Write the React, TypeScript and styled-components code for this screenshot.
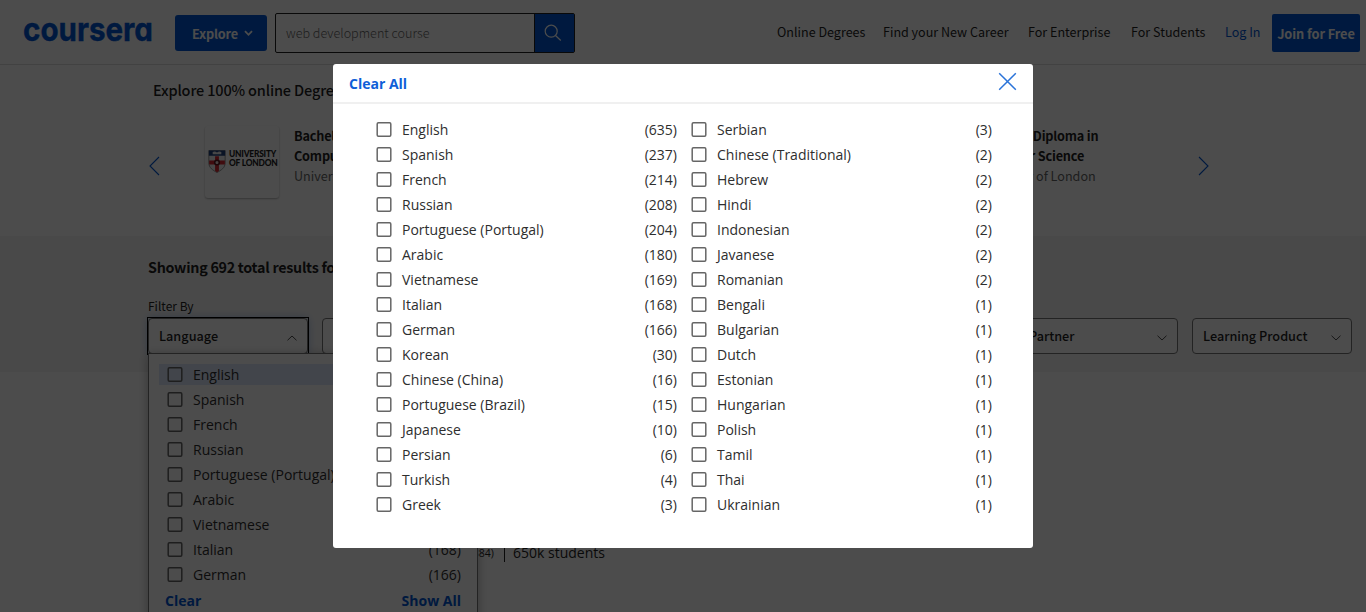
import React from 'react';
import styled, { createGlobalStyle } from 'styled-components';

const humanist = "'Noto Sans CJK SC', 'Noto Sans', sans-serif";
const body = "'Open Sans', 'Noto Sans', sans-serif";

const GlobalStyle = createGlobalStyle`
  *, *::before, *::after { box-sizing: border-box; }
  html, body, #root { height: 100%; }
  body { margin: 0; overflow: hidden; background: #fff; color: #1f1f1f; font-family: ${body}; font-size: 14px; }
  button { font: inherit; border: 0; padding: 0; background: none; }
`;

const Page = styled.div`
  height: 612px;
  overflow: hidden;
`;

const Header = styled.header`
  display: flex;
  align-items: center;
  height: 65px;
  padding: 2px 6px 0 24px;
  border-bottom: 1px solid #dcdcdc;
  font-family: ${humanist};
`;

const Logo = styled.svg`
  display: block;
  width: 129px;
  height: 30px;
  margin: -4px 22px 0 0;
  overflow: visible;
`;

const LogoText = styled.text`
  font-family: Inter, sans-serif;
  font-size: 33px;
  font-weight: 700;
  font-feature-settings: 'cv11';
  fill: #0056d2;
  stroke: #0056d2;
  stroke-width: 0.4px;
`;

const ExploreButton = styled.button`
  display: flex;
  align-items: center;
  justify-content: center;
  gap: 6px;
  width: 92px;
  height: 36px;
  margin-right: 8px;
  padding: 1px 0 0 3px;
  border-radius: 3px;
  background: #0056d2;
  color: #fff;
  font-size: 12.7px;
  font-weight: 700;
  letter-spacing: -0.15px;
`;

const Search = styled.div`
  display: flex;
  width: 300px;
  height: 40px;
  border: 1px solid #1f1f1f;
  border-radius: 2px;
`;

const SearchText = styled.div`
  flex: 1;
  padding-left: 10px;
  color: #666;
  font-size: 12.6px;
  font-weight: 300;
  line-height: 38px;
`;

const SearchButton = styled.button`
  display: flex;
  align-items: center;
  justify-content: center;
  width: 40px;
  padding-right: 4px;
  border-left: 1px solid #1f1f1f;
  background: #0056d2;
`;

const Nav = styled.nav`
  display: flex;
  align-items: center;
  gap: 18px;
  margin: -4px 0 0 auto;
`;

const NavLink = styled.span<{ $accent?: boolean; $width: number }>`
  width: ${p => p.$width}px;
  color: ${p => (p.$accent ? '#0056d2' : '#1f1f1f')};
  font-size: 12.55px;
  white-space: nowrap;
`;

const JoinButton = styled.button`
  width: 88px;
  height: 38px;
  margin-left: 12px;
  border-radius: 2px;
  background: #0056d2;
  color: #fff;
  font-family: ${humanist};
  font-size: 12.8px;
  font-weight: 700;
  letter-spacing: -0.1px;
  white-space: nowrap;
`;

const Degrees = styled.section`
  height: 171px;
  padding: 13px 0 0 148px;
  font-family: ${humanist};
`;

const DegreesTitle = styled.h2`
  margin: 0 0 0 5px;
  font-size: 14.5px;
  font-weight: 500;
  letter-spacing: -0.15px;
  line-height: 24px;
`;

const Carousel = styled.div`
  display: flex;
  align-items: flex-start;
  padding-top: 24px;
`;

const Arrow = styled.svg`
  flex: none;
  display: block;
  width: 12px;
  height: 20px;
  margin-top: 30px;
`;

const Slides = styled.div`
  display: flex;
  width: 1037px;
  padding-left: 45px;
`;

const Degree = styled.article`
  display: flex;
  flex: none;
  gap: 15px;
  width: 340px;
`;

const Crest = styled.div`
  display: flex;
  align-items: center;
  gap: 3px;
  width: 74px;
  height: 72px;
  padding: 0 0 1px 3px;
  border-radius: 3px;
  box-shadow: 0 1px 2px rgba(0, 0, 0, 0.3);
`;

const CrestName = styled.div`
  padding-bottom: 6px;
  font-family: Lato, sans-serif;
  font-size: 8.4px;
  font-weight: 900;
  line-height: 9px;
  letter-spacing: -0.2px;
  white-space: nowrap;
`;

const DegreeText = styled.div`
  font-size: 12.6px;
  line-height: 20px;
  white-space: nowrap;
  color: #666;

  strong { display: block; color: #1f1f1f; font-size: 12.7px; font-weight: 700; letter-spacing: -0.2px; }
`;

const Filters = styled.section`
  height: 136px;
  padding: 19px 0 0 148px;
  background: #f5f5f5;
  font-family: ${humanist};
`;

const ResultsTitle = styled.h1`
  margin: 0;
  font-size: 14.3px;
  font-weight: 700;
  letter-spacing: -0.27px;
  line-height: 24px;
`;

const FilterLabel = styled.div`
  margin-top: 18px;
  font-size: 12px;
  line-height: 18px;
`;

const FilterRow = styled.div`
  display: flex;
  gap: 14px;
  margin-top: 3px;
`;

const FilterBox = styled.div<{ $open?: boolean }>`
  position: relative;
  width: 160px;
  height: 36px;
  border: 1px solid #757575;
  border-radius: 4px;
  box-shadow: ${p => (p.$open ? '0 0 8px rgba(0, 86, 210, 0.35)' : 'none')};
  background: #fff;

  &::after {
    content: '';
    display: ${p => (p.$open ? 'block' : 'none')};
    position: absolute;
    inset: -2px;
    border: 1px solid #000;
  }
`;

const FilterHead = styled.div`
  display: flex;
  align-items: center;
  justify-content: space-between;
  height: 33px;
  padding: 0 10px 1px;
  font-size: 12.7px;
  font-weight: 500;
  white-space: nowrap;

  svg { margin-top: 6px; }
`;

const Menu = styled.div`
  position: absolute;
  z-index: 1;
  top: 34px;
  left: -1px;
  width: 330px;
  height: 280px;
  padding: 8px 10px 0;
  border: 1px solid #757575;
  background: #fff;
  box-shadow: 0 2px 10px rgba(0, 0, 0, 0.3);
  font-family: ${body};
`;

const Option = styled.label<{ $active?: boolean }>`
  display: flex;
  align-items: center;
  height: 25px;
  padding: 0 6px 0 8px;
  background: ${p => (p.$active ? 'linear-gradient(#dce8fb, #dce8fb) 0 2px / 100% 21px no-repeat' : 'none')};
  color: #2e2e2e;
  font-size: 14px;
  line-height: 25px;
`;

const Box = styled.svg`
  flex: none;
  display: block;
  width: 16px;
  height: 15px;
  margin-right: 10px;
`;

const Name = styled.span`
  flex: 1;
  white-space: nowrap;
`;

const MenuActions = styled.div`
  display: flex;
  justify-content: space-between;
  padding: 1px 6px 0;
  color: #0056d2;
  font-weight: 700;
  line-height: 25px;
`;

const ResultMeta = styled.div`
  display: flex;
  align-items: center;
  padding: 171px 0 0 461px;
  line-height: 20px;

  small { width: 43px; font-size: 10.5px; }
  span { padding-left: 8px; border-left: 1px solid #1f1f1f; line-height: 18px; }
`;

const Overlay = styled.div`
  position: fixed;
  z-index: 10;
  inset: 0;
  display: flex;
  justify-content: center;
  align-items: flex-start;
  padding-top: 64px;
  background: rgba(0, 0, 0, 0.7);
`;

const Dialog = styled.div`
  width: 700px;
  height: 484px;
  border-radius: 3px;
  background: #fff;
`;

const DialogHead = styled.div`
  display: flex;
  align-items: flex-start;
  justify-content: space-between;
  height: 40px;
  padding: 8px 16px 0;
  border-bottom: 2px solid #f0f0f0;
`;

const ClearAll = styled.button`
  color: #0f5fd8;
  font-weight: 700;
  line-height: 24px;
`;

const Columns = styled.div`
  display: flex;
  padding: 13px 35px 0;
`;

const Column = styled.div`
  width: 315px;
`;

const primary: [string, number][] = [
  ['English', 635], ['Spanish', 237], ['French', 214], ['Russian', 208],
  ['Portuguese (Portugal)', 204], ['Arabic', 180], ['Vietnamese', 169], ['Italian', 168],
  ['German', 166], ['Korean', 30], ['Chinese (China)', 16], ['Portuguese (Brazil)', 15],
  ['Japanese', 10], ['Persian', 6], ['Turkish', 4], ['Greek', 3],
];

const secondary: [string, number][] = [
  ['Serbian', 3], ['Chinese (Traditional)', 2], ['Hebrew', 2], ['Hindi', 2],
  ['Indonesian', 2], ['Javanese', 2], ['Romanian', 2], ['Bengali', 1],
  ['Bulgarian', 1], ['Dutch', 1], ['Estonian', 1], ['Hungarian', 1],
  ['Polish', 1], ['Tamil', 1], ['Thai', 1], ['Ukrainian', 1],
];

const links: [string, number][] = [
  ['Online Degrees', 88], ['Find your New Career', 127], ['For Enterprise', 85], ['For Students', 76],
];

const filters = ['Level', 'Duration', 'Subtitles', 'Skills', 'Partner', 'Learning Product'];

const degrees: [string, string][] = [
  ['Bachelor of Science in', 'Computer Science'],
  ['Master of Science in', 'Data Science'],
  ['Graduate Diploma in', 'Computer Science'],
];

function Chevron({ up }: { up?: boolean }) {
  return (
    <svg width="10" height="6" viewBox="0 0 10 6" fill="none" stroke="#1f1f1f" strokeWidth=".8">
      <path d={up ? 'M.5 5.3 5 1l4.5 4.3' : 'M.5.7 5 5 9.5.7'} />
    </svg>
  );
}

function UniversityCrest() {
  return (
    <Crest>
      <svg width="18" height="23" viewBox="0 0 18 24">
        <path d="M.5.5h17v13c0 5-4 7.500-8.500 10C4.500 21 .5 18.500.5 13.500z" fill="#f1f1f1" stroke="#777" strokeWidth=".8" />
        <path d="M.5.500h17V6H.5z" fill="#24437c" />
        <path d="M4.500 2q2.500-.8 4.500.5 2-1.300 4.500-.5v2.500H4.500z" fill="#eee" />
        <path d="M7 6.500h4v15.500l-2 1.200-2-1.200zM.8 11h16.400v4H.8z" fill="#d52a32" />
        <circle cx="9" cy="13" r="2.400" fill="#f4dede" stroke="#5a1c22" strokeWidth="1.600" />
      </svg>
      <CrestName>UNIVERSITY<br />OF LONDON</CrestName>
    </Crest>
  );
}

function Options({ items, active }: { items: [string, number][]; active?: string }) {
  return (
    <>
      {items.map(([name, count]) => (
        <Option key={name} $active={name === active}>
          <Box viewBox="0 0 16 15">
            <rect x="1.200" y=".8" width="13.600" height="13.400" rx="1.200" fill="none" stroke="#666" strokeWidth="1.500" />
          </Box>
          <Name>{name}</Name>
          <span>{`(${count})`}</span>
        </Option>
      ))}
    </>
  );
}

export default function App() {
  return (
    <>
      <GlobalStyle />
      <Page>
        <Header>
          <Logo>
            <LogoText x="-1" y="25" textLength="130" lengthAdjust="spacingAndGlyphs">coursera</LogoText>
          </Logo>
          <ExploreButton>
            Explore
            <svg width="9" height="7" viewBox="0 0 9 7" fill="none" stroke="#fff" strokeWidth="1.800">
              <path d="M1 1.200l3.500 3.600L8 1.200" />
            </svg>
          </ExploreButton>
          <Search>
            <SearchText>web development course</SearchText>
            <SearchButton>
              <svg width="18" height="18" viewBox="0 0 18 18" fill="none" stroke="#fff" strokeWidth="1.200">
                <circle cx="7.200" cy="7.200" r="6" />
                <path d="M11.500 11.500l5.300 5" />
              </svg>
            </SearchButton>
          </Search>
          <Nav>
            {links.map(([label, width]) => <NavLink key={label} $width={width}>{label}</NavLink>)}
            <NavLink $accent $width={35}>Log In</NavLink>
          </Nav>
          <JoinButton>Join for Free</JoinButton>
        </Header>

        <Degrees>
          <DegreesTitle>Explore 100% online Degrees and Certificates</DegreesTitle>
          <Carousel>
            <Arrow viewBox="0 0 12 20" fill="none" stroke="#0056d2" strokeWidth="1.100"><path d="M11 1 2 10l9 9" /></Arrow>
            <Slides>
              {degrees.map(([first, second]) => (
                <Degree key={first}>
                  <UniversityCrest />
                  <DegreeText>
                    <strong>{first}</strong>
                    <strong>{second}</strong>
                    University of London
                  </DegreeText>
                </Degree>
              ))}
            </Slides>
            <Arrow viewBox="0 0 12 20" fill="none" stroke="#0056d2" strokeWidth="1.100"><path d="M2 1l9 9-9 9" /></Arrow>
          </Carousel>
        </Degrees>

        <Filters>
          <ResultsTitle>Showing 692 total results for "web development course"</ResultsTitle>
          <FilterLabel>Filter By</FilterLabel>
          <FilterRow>
            <FilterBox $open>
              <FilterHead>Language<Chevron up /></FilterHead>
              <Menu>
                <Options items={primary.slice(0, 9)} active="English" />
                <MenuActions><span>Clear</span><span>Show All</span></MenuActions>
              </Menu>
            </FilterBox>
            {filters.map(label => (
              <FilterBox key={label}><FilterHead>{label}<Chevron /></FilterHead></FilterBox>
            ))}
          </FilterRow>
        </Filters>

        <ResultMeta><small>(9,884)</small><span>650k students</span></ResultMeta>
      </Page>

      <Overlay>
        <Dialog>
          <DialogHead>
            <ClearAll>Clear All</ClearAll>
            <svg width="19" height="19" viewBox="0 0 19 19" fill="none" stroke="#2a73d9" strokeWidth="1.500">
              <path d="M1.200 1.200l16.600 16.600M17.800 1.200 1.200 17.800" />
            </svg>
          </DialogHead>
          <Columns>
            <Column><Options items={primary} /></Column>
            <Column><Options items={secondary} /></Column>
          </Columns>
        </Dialog>
      </Overlay>
    </>
  );
}
